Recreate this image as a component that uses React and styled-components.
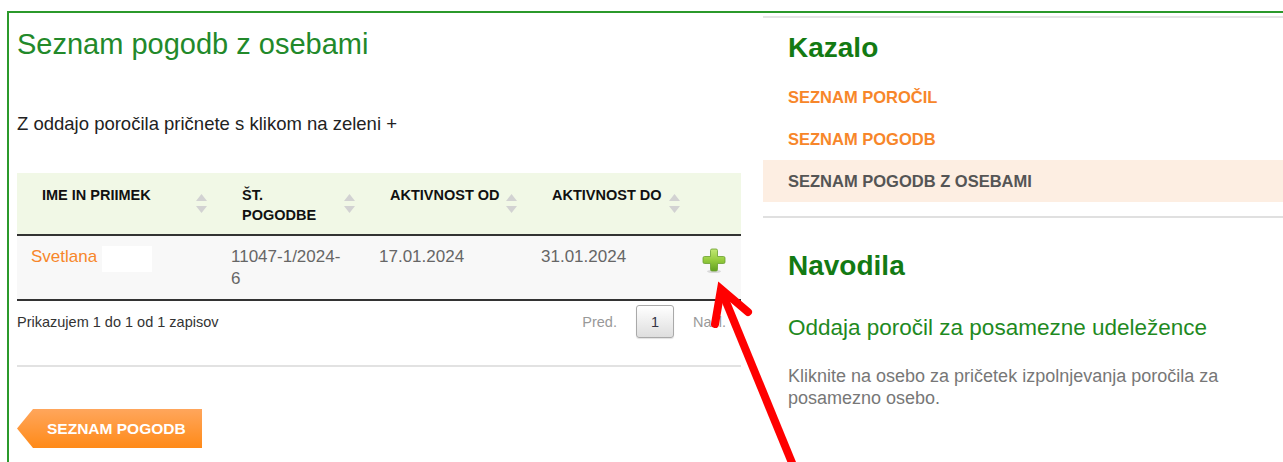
import React from "react";
import styled, { createGlobalStyle } from "styled-components";

const GlobalStyle = createGlobalStyle`
  html, body {
    margin: 0;
    padding: 0;
    background: #fff;
  }
  body {
    font-family: "Liberation Sans", Arial, sans-serif;
  }
`;

const columns = [
  { key: "name", label: "IME IN PRIIMEK", width: 200 },
  { key: "number", label: <>ŠT.<br />POGODBE</>, width: 148 },
  { key: "from", label: "AKTIVNOST OD", width: 162 },
  { key: "to", label: "AKTIVNOST DO", width: 163 },
  { key: "add", label: null, width: 51 },
];

const contracts = [
  { id: 1, name: "Svetlana", number: "11047-1/2024-6", from: "17.01.2024", to: "31.01.2024" },
];

const menu = [
  { label: "SEZNAM POROČIL" },
  { label: "SEZNAM POGODB" },
  { label: "SEZNAM POGODB Z OSEBAMI", active: true },
];

function SortArrows() {
  return (
    <SortIcon width="11" height="22" viewBox="0 0 11 22">
      <path d="M0 8 L5.5 1 L11 8 Z" fill="#d2d2d2" />
      <path d="M0 13 L11 13 L5.5 20 Z" fill="#d2d2d2" />
    </SortIcon>
  );
}

function PlusButton() {
  return (
    <PlusIcon width="24" height="26" viewBox="0 0 24 26">
      <defs>
        <linearGradient id="plusFill" x1="0" y1="0" x2="0" y2="1">
          <stop offset="0" stopColor="#c2e874" />
          <stop offset="0.5" stopColor="#96cc3e" />
          <stop offset="1" stopColor="#62a120" />
        </linearGradient>
      </defs>
      <ellipse cx="12" cy="23.5" rx="7" ry="1.6" fill="rgba(0,0,0,0.12)" />
      <path
        d="M8.5 2.5 Q8.5 1 10 1 L14 1 Q15.5 1 15.5 2.5 L15.5 8.5 L21.5 8.5 Q23 8.5 23 10 L23 14 Q23 15.5 21.5 15.5 L15.5 15.5 L15.5 21.5 Q15.5 23 14 23 L10 23 Q8.5 23 8.5 21.5 L8.5 15.5 L2.5 15.5 Q1 15.5 1 14 L1 10 Q1 8.5 2.5 8.5 L8.5 8.5 Z"
        fill="url(#plusFill)"
        stroke="#6a9f2e"
        strokeWidth="0.8"
      />
    </PlusIcon>
  );
}

export default function App() {
  return (
    <>
      <GlobalStyle />
      <Page>
        <Frame>
          <Main>
            <Title>Seznam pogodb z osebami</Title>
            <Intro>Z oddajo poročila pričnete s klikom na zeleni +</Intro>

            <Table>
              <colgroup>
                {columns.map((c) => (
                  <col key={c.key} style={{ width: c.width }} />
                ))}
              </colgroup>
              <thead>
                <tr>
                  {columns.map((c) => (
                    <HeadCell key={c.key}>
                      {c.label && (
                        <HeadInner>
                          <HeadLabel>{c.label}</HeadLabel>
                          <SortArrows />
                        </HeadInner>
                      )}
                    </HeadCell>
                  ))}
                </tr>
              </thead>
              <tbody>
                {contracts.map((row) => (
                  <tr key={row.id}>
                    <BodyCell>
                      <NameLink>{row.name}</NameLink>
                      <Masked />
                    </BodyCell>
                    <BodyCell>{row.number}</BodyCell>
                    <BodyCell>{row.from}</BodyCell>
                    <BodyCell>{row.to}</BodyCell>
                    <BodyCell $icon>
                      <PlusButton />
                    </BodyCell>
                  </tr>
                ))}
              </tbody>
            </Table>

            <Footer>
              <InfoText>Prikazujem 1 do 1 od 1 zapisov</InfoText>
              <Pager>
                <PageLabel>Pred.</PageLabel>
                <PageButton>1</PageButton>
                <PageLabel>Nasl.</PageLabel>
              </Pager>
            </Footer>

            <Divider />

            <BackButton>SEZNAM POGODB</BackButton>
          </Main>

          <Sidebar>
            <SideHeading>Kazalo</SideHeading>
            <MenuList>
              {menu.map((m) => (
                <MenuItem key={m.label} $active={m.active}>
                  {m.label}
                </MenuItem>
              ))}
            </MenuList>
            <Rule />
            <SideHeading $gap={32}>Navodila</SideHeading>
            <Subheading>Oddaja poročil za posamezne udeležence</Subheading>
            <Note>
              Kliknite na osebo za pričetek izpolnjevanja poročila za posamezno osebo.
            </Note>
          </Sidebar>
        </Frame>

        <Arrow width="1283" height="462" viewBox="0 0 1283 462">
          <line x1="722" y1="292" x2="797" y2="475" stroke="#ff0000" strokeWidth="8" />
          <polyline
            points="715,324 721,289 748,312"
            fill="none"
            stroke="#ff0000"
            strokeWidth="8"
            strokeLinecap="round"
            strokeLinejoin="miter"
          />
        </Arrow>
      </Page>
    </>
  );
}

const Page = styled.div`
  position: relative;
  box-sizing: border-box;
  min-height: 100vh;
  padding: 11px 0 0 7px;
  overflow: hidden;
`;

const Frame = styled.div`
  display: flex;
  align-items: flex-start;
  min-height: calc(100vh - 13px);
  border-top: 2px solid #2b992b;
  border-left: 2px solid #2b992b;
`;

const Main = styled.div`
  flex: none;
  width: 724px;
  padding-left: 8px;
`;

const Title = styled.h1`
  margin: 14px 0 0;
  font-size: 29px;
  line-height: 34px;
  font-weight: normal;
  color: #22892a;
`;

const Intro = styled.p`
  margin: 52px 0 0;
  font-size: 18.5px;
  line-height: 22px;
  color: #222;
`;

const Table = styled.table`
  width: 724px;
  margin-top: 38px;
  border-collapse: collapse;
  table-layout: fixed;
`;

const HeadCell = styled.th`
  padding: 0;
  background: #f1f8e6;
  border-bottom: 2px solid #333;
  text-align: left;
  vertical-align: top;
`;

const HeadInner = styled.div`
  display: flex;
  align-items: flex-start;
  height: 61px;
  padding: 0 10px 0 25px;
`;

const HeadLabel = styled.span`
  margin-top: 12px;
  white-space: nowrap;
  font-size: 14.5px;
  line-height: 20px;
  font-weight: bold;
  color: #111;
`;

const SortIcon = styled.svg`
  flex: none;
  align-self: center;
  margin-left: auto;
`;

const BodyCell = styled.td`
  padding: ${(p) => (p.$icon ? "12px 4px 0 0" : "10px 20px 9px 14px")};
  background: #f8f8f8;
  border-bottom: 2px solid #333;
  vertical-align: top;
  text-align: ${(p) => (p.$icon ? "center" : "left")};
  font-size: 17px;
  line-height: 22px;
  color: #666;
`;

const NameLink = styled.a`
  color: #f7862a;
  text-decoration: none;
`;

const Masked = styled.span`
  display: inline-block;
  width: 50px;
  height: 26px;
  margin-left: 5px;
  background: #fff;
  vertical-align: top;
`;

const PlusIcon = styled.svg`
  display: block;
  margin: 0 auto;
`;

const Footer = styled.div`
  display: flex;
  align-items: center;
  justify-content: space-between;
  height: 33px;
  margin-top: 4px;
  padding-right: 15px;
`;

const InfoText = styled.span`
  font-size: 14.5px;
  color: #333;
`;

const Pager = styled.div`
  display: flex;
  align-items: center;
  gap: 19px;
`;

const PageLabel = styled.span`
  font-size: 14.5px;
  color: #999;
`;

const PageButton = styled.span`
  display: flex;
  align-items: center;
  justify-content: center;
  box-sizing: border-box;
  width: 38px;
  height: 33px;
  border: 1px solid #a9a9a9;
  border-radius: 3px;
  background: linear-gradient(#ffffff, #dedede);
  box-shadow: 0 1px 1px rgba(0, 0, 0, 0.12);
  font-size: 14.5px;
  color: #334;
`;

const Divider = styled.div`
  margin-top: 27px;
  border-top: 2px solid #e2e2e2;
`;

const BackButton = styled.a`
  display: flex;
  align-items: center;
  box-sizing: border-box;
  width: 185px;
  height: 39px;
  margin-top: 42px;
  padding-left: 30px;
  background: linear-gradient(#ffa65c, #ff8a18);
  clip-path: polygon(16px 0, 100% 0, 100% 100%, 16px 100%, 0 50%);
  font-size: 15.5px;
  font-weight: bold;
  color: #fff;
  text-decoration: none;
`;

const Sidebar = styled.aside`
  flex: 1;
  margin: 3px 0 0 22px;
  border-top: 2px solid #e4e4e4;
`;

const SideHeading = styled.h2`
  margin: ${(p) => p.$gap ?? 14}px 0 0 25px;
  font-size: 28px;
  line-height: 32px;
  font-weight: bold;
  color: #137a13;
`;

const MenuList = styled.ul`
  margin: 12px 0 0;
  padding: 0;
  list-style: none;
`;

const MenuItem = styled.li`
  display: flex;
  align-items: center;
  height: 42px;
  padding-left: 25px;
  background: ${(p) => (p.$active ? "#fdeee2" : "transparent")};
  font-size: 16.5px;
  font-weight: bold;
  color: ${(p) => (p.$active ? "#555" : "#f7862a")};
`;

const Rule = styled.div`
  margin-top: 14px;
  border-top: 2px solid #e0e0e0;
`;

const Subheading = styled.h3`
  margin: 33px 0 0 25px;
  font-size: 22.5px;
  line-height: 26px;
  font-weight: normal;
  color: #1f8a1f;
`;

const Note = styled.p`
  margin: 24px 25px 0;
  font-size: 18px;
  line-height: 22px;
  color: #777;
`;

const Arrow = styled.svg`
  position: absolute;
  top: 0;
  left: 0;
  pointer-events: none;
`;
